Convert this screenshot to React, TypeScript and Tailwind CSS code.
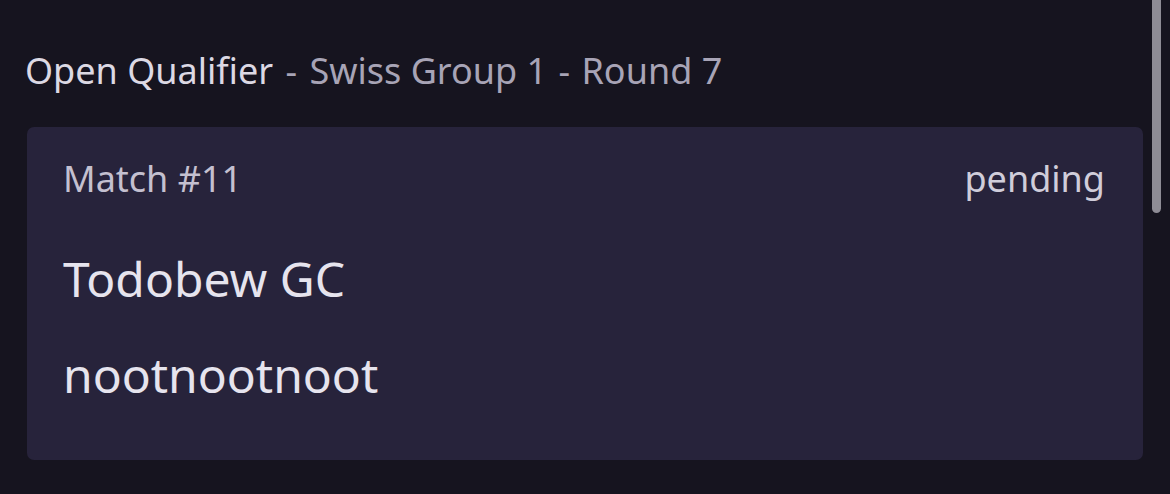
const match = {
  event: "Open Qualifier",
  group: "Swiss Group 1",
  round: "Round 7",
  number: 11,
  status: "pending",
  teams: ["Todobew GC", "nootnootnoot"],
};

export default function App() {
  return (
    <div
      className="relative h-[494px] w-full overflow-hidden bg-[#16141f] px-[27px] pt-[47px]"
      style={{ fontFamily: '"Noto Sans", "Open Sans", sans-serif' }}
    >
      <h2 className="-ml-[2px] text-[36px] leading-[48px] font-normal text-[#dcd9e4]">
        {match.event}
        <span className="text-[#a8a4b6]">
          <span className="mx-[3px]"> - </span>
          {match.group}
          <span className="mx-[2px]"> - </span>
          {match.round}
        </span>
      </h2>

      <div className="mt-[32px] h-[333px] rounded-[7px] bg-[#27233b] px-[37px] pt-[28px]">
        <div className="flex items-center justify-between text-[36px] leading-[48px] text-[#c4c0d0]">
          <span className="-ml-px">Match #{match.number}</span>
          <span className="mr-px text-[#d0cdda]">{match.status}</span>
        </div>
        <div className="mt-[44px] -ml-px flex flex-col gap-[32px] text-[48px] leading-[64px] text-[#e6e4ee]">
          {match.teams.map((team) => (
            <div key={team}>{team}</div>
          ))}
        </div>
      </div>

      {/* overlay scrollbar */}
      <div className="absolute top-0 right-[9px] h-[213px] w-[9px] rounded-b-full bg-[#8e8c95]" />
    </div>
  );
}
